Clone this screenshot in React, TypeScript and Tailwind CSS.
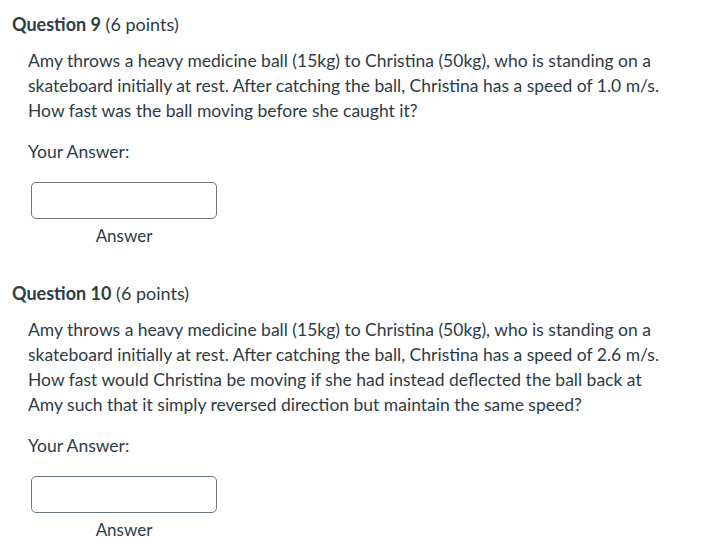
const questions = [
  {
    number: 9,
    points: 6,
    text: 'Amy throws a heavy medicine ball (15kg) to Christina (50kg), who is standing on a skateboard initially at rest. After catching the ball, Christina has a speed of 1.0 m/s. How fast was the ball moving before she caught it?',
  },
  {
    number: 10,
    points: 6,
    text: 'Amy throws a heavy medicine ball (15kg) to Christina (50kg), who is standing on a skateboard initially at rest. After catching the ball, Christina has a speed of 2.6 m/s. How fast would Christina be moving if she had instead deflected the ball back at Amy such that it simply reversed direction but maintain the same speed?',
  },
]

function Question({ number, points, text }: { number: number; points: number; text: string }) {
  return (
    <div className="flex flex-col">
      {/* Titulo da questao */}
      <h2 className="pl-3 text-[18px] leading-[24px] text-[#2d3b45]">
        <span className="font-bold">Question {number}</span> ({points} points)
      </h2>
      <div className="mt-3 pl-7">
        <p className="w-[645px] text-[17.5px] leading-[25px] text-[#2d3b45]">{text}</p>
        <div className="mt-4 text-[17.5px] leading-[25px] text-[#2d3b45]">Your Answer:</div>
        <div className="mt-[18px] ml-[3px] flex w-[186px] flex-col items-center">
          <input
            type="text"
            className="h-[37px] w-full rounded-[5px] border border-[#6b7780] bg-white px-2 outline-none"
          />
          <span className="mt-[5px] text-[17px] leading-[24px] text-[#2d3b45]">Answer</span>
        </div>
      </div>
    </div>
  )
}

export default function App() {
  return (
    <div className="min-h-screen bg-white pt-3 font-['Lato','Liberation_Sans',sans-serif]">
      <div className="flex flex-col gap-[33px]">
        {questions.map((q) => (
          <Question key={q.number} {...q} />
        ))}
      </div>
    </div>
  )
}
